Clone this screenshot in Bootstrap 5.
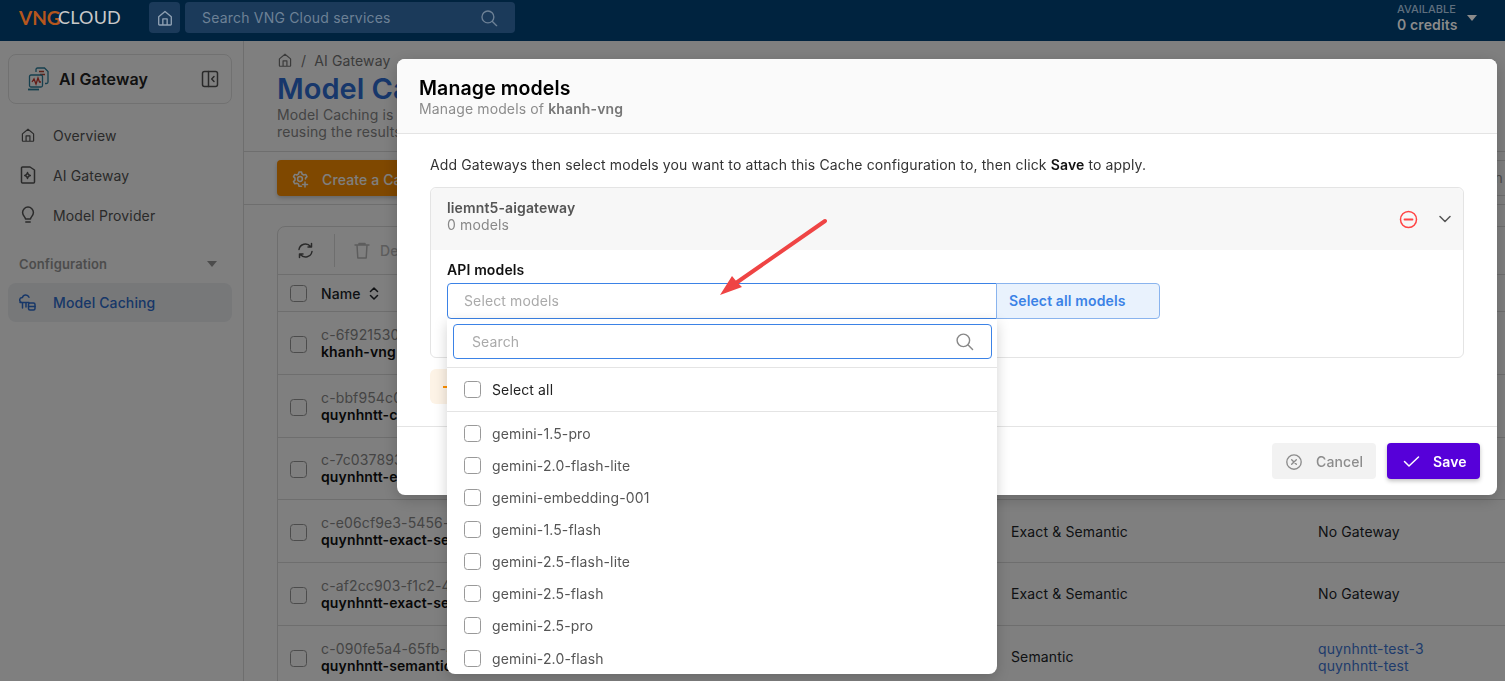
<!DOCTYPE html>
<html>

<head>
  <meta charset="utf-8">
  <title>Model Caching</title>
  <link href="https://cdn.jsdelivr.net/npm/bootstrap@5.3.2/dist/css/bootstrap.min.css" rel="stylesheet" type="text/css" />
  <script src="https://cdn.jsdelivr.net/npm/bootstrap@5.3.2/dist/js/bootstrap.bundle.min.js"></script>
  <style>
    html, body { height: 681px; overflow: hidden; }
    body { font-family: Inter, "Liberation Sans", sans-serif; font-size: 14px; line-height: 17px; letter-spacing: .13px; color: #222; background: #fff; }
    svg { display: block; flex: none; }
    .ic { fill: none; stroke: currentColor; stroke-width: 1.5; stroke-linecap: round; stroke-linejoin: round; }
    button, input { letter-spacing: inherit; }

    /* top bar */
    .topbar { height: 41px; background: #00233f; padding: 2px 0 8px 19px; }
    .logo-vng { font-family: Lato, sans-serif; font-weight: 700; font-size: 19px; color: #b5561d; line-height: 31px; width: 39px; letter-spacing: 0; }
    .logo-cloud { font-family: Lato, sans-serif; font-size: 18px; letter-spacing: .2px; color: #c9c9c9; line-height: 31px; width: 91px; }
    .home-btn { width: 31px; height: 31px; background: #1b3a5a; border-radius: 4px; color: #8fa0b2; }
    .top-search { width: 330px; height: 31px; margin-left: 5px; background: #1b3a5a; border-radius: 4px; padding: 0 17px; color: #6d8196; letter-spacing: .2px; }
    .credits { margin-left: auto; margin-right: 19px; color: #8b8b8b; width: 89px; padding-bottom: 0; }
    .credits-label { font-size: 11px; font-weight: 500; line-height: 13px; color: #5f6f7e; letter-spacing: 0; }
    .credits-num { font-size: 14px; font-weight: 600; line-height: 17px; }
    .caret-down { width: 0; height: 0; border-left: 5px solid transparent; border-right: 5px solid transparent; border-top: 6px solid currentColor; }

    /* side menu */
    .page { height: 640px; }
    .side { width: 244px; flex: none; border-right: 1px solid #ddd; padding: 13px 11px 0 8px; }
    .brand-box { height: 50px; border: 1px solid #e2e2e2; border-radius: 8px; padding: 0 12px 0 18px; }
    .brand-name { font-size: 16px; font-weight: 600; margin-left: 10px; color: #222; }
    .side-nav { margin-top: 11px; }
    .side-nav .nav-link { height: 40px; padding: 0 0 0 12px; gap: 17px; color: #555; font-size: 14px; font-weight: 400; }
    .side-group { margin-top: 19px; height: 20px; padding: 0 15px 0 11px; font-size: 13px; font-weight: 600; color: #999; }
    .side-nav .side-active { margin-top: 9px; height: 39px; background: #eef0f3; border-radius: 8px; color: #2f6fd0; font-weight: 500; padding: 0 0 1px 11px; gap: 17px; }

    /* content */
    .content { min-width: 0; overflow: hidden; }
    .page-head { height: 111px; padding: 10px 33px 0; border-bottom: 1px solid #ddd; }
    .crumbs { height: 18px; margin: 0; font-size: 14px; color: #777; gap: 8px; }
    .page-title { font-size: 29px; line-height: 36px; font-weight: 600; color: #2f6fd6; margin: 2px 0 0; white-space: nowrap; letter-spacing: 0; }
    .page-desc { color: #888; white-space: nowrap; margin: -1px 0 0; }
    .action-row { height: 53px; padding: 8px 0 0 33px; border-bottom: 1px solid #ddd; }
    .btn-create { height: 36px; width: 190px; padding: 2px 14px 0; gap: 13px; background: #ff9000; color: #fff; border: 0; border-radius: 4px; font-size: 14px; font-weight: 500; box-shadow: 0 2px 4px rgba(0,0,0,.2); }
    .filter-box { width: 130px; height: 36px; margin-left: auto; margin-right: -13px; border: 1px solid #ddd; border-radius: 4px; line-height: 34px; padding-right: 14px; text-align: right; color: #999; white-space: nowrap; overflow: hidden; }
    .table-box { margin: 21px -30px 0 33px; border: 1px solid #ddd; border-radius: 8px 8px 0 0; }
    .table-tools { height: 47px; color: #555; }
    .tool-cell { height: 33px; padding: 0 20px 0 19px; }
    .tool-del { border-left: 1px solid #ddd; color: #bbb; gap: 10px; font-weight: 500; padding-right: 200px; }
    .cache-table { table-layout: fixed; width: 1260px; margin: 0; }
    .cache-table th, .cache-table td { padding: 0; vertical-align: middle; border-color: #ddd; font-size: 14px; }
    .cache-table th { height: 37px; border-top: 1px solid #ddd; font-weight: 500; }
    .cache-table td { height: 62.75px; }
    .cache-table th .form-check-input { margin: 0 0 0 12px; }
    .cache-table td .form-check-input { margin: 3px 0 0 12px; }
    .col-check { width: 43px; }
    .col-name { width: 690px; }
    .col-type { width: 307px; }
    .cache-id { color: #8a8a8a; white-space: nowrap; }
    .cache-name { font-weight: 600; color: #111; white-space: nowrap; }
    .gw-link { color: #3f78d8; display: block; text-decoration: none; }

    .form-check-input { width: 17px; height: 17px; border: 1px solid #999; border-radius: 4px; margin: 0; flex: none; }

    /* dialog */
    .shade { position: fixed; left: 0; right: 0; top: 41px; bottom: 0; background: rgba(0,0,0,.5); }
    .dialog { position: fixed; left: 397px; top: 59px; width: 1100px; height: 436px; background: #fff; border-radius: 8px; box-shadow: 0 4px 16px rgba(0,0,0,.2); }
    .dialog-head { height: 75px; background: #fafafa; border-bottom: 1px solid #e4e4e4; border-radius: 8px 8px 0 0; padding: 19px 22px 0; }
    .dialog-title { font-size: 19.5px; line-height: 20px; font-weight: 600; color: #000; margin: 0; }
    .dialog-sub { color: #8c8c8c; margin: 2px 0 0; }
    .dialog-sub b { font-weight: 600; color: #777; }
    .dialog-body { height: 292px; padding: 22px 33px 0; color: #333; }
    .dialog-body > p { margin: 0 0 14px; }
    .dialog-body > p b { font-weight: 600; color: #111; }
    .gw-panel { height: 171px; border: 1px solid #e4e4e4; border-radius: 6px; }
    .gw-head { height: 62px; background: #f7f7f7; border-radius: 6px 6px 0 0; padding: 0 12px 0 16px; }
    .gw-title { padding-bottom: 6px; }
    .gw-name { font-weight: 600; color: #555; }
    .gw-count { color: #888; }
    .gw-minus { color: #f44; margin-right: 21px; }
    .gw-chevron { color: #555; }
    .gw-body { padding: 11px 16px 0; position: relative; }
    .field-label { font-weight: 600; color: #111; margin-bottom: 5px; display: block; }
    .pick-wrap { position: relative; width: 713px; }
    .pick-input { height: 36px; width: 550px; flex: none; border: 1px solid #3b82e6; border-radius: 4px 0 0 4px; padding: 0 16px 2px; font-size: 14px; box-shadow: none; }
    .pick-input::placeholder, .drop-search input::placeholder { color: #aaa; }
    .pick-all { height: 36px; width: 164px; margin-left: -1px; padding: 0 12px 2px; text-align: left; background: #e9f2fd; border: 1px solid #8ab4ee; border-radius: 0 4px 4px 0; color: #3b82e6; font-size: 14px; font-weight: 600; }
    .drop { position: absolute; left: 0; top: 36px; width: 550px; height: 355px; background: #fff; border-radius: 0 0 8px 8px; box-shadow: 0 4px 14px rgba(0,0,0,.18); overflow: hidden; z-index: 2; }
    .drop-search { position: relative; margin: 5px 5px 8px 6px; }
    .drop-search input { height: 35px; border: 1px solid #3b82e6; border-radius: 4px; padding: 0 18px; font-size: 14px; box-shadow: none; }
    .drop-search svg { position: absolute; right: 18px; top: 8px; color: #888; }
    .drop-all { height: 45px; gap: 11px; padding: 0 17px; border-top: 1px solid #e4e4e4; border-bottom: 1px solid #e4e4e4; color: #222; }
    .drop-list { padding-top: 5px; }
    .drop-list .list-group-item { height: 32.15px; border: 0; padding: 0 17px; gap: 11px; color: #555; background: transparent; }
    .warn-box { width: 420px; height: 35px; margin-top: 11px; background: #fdf3e6; border-radius: 6px; padding-left: 13px; color: #ff9000; }
    .warn-dash { width: 5px; height: 2px; background: currentColor; }
    .dialog-foot { height: 69px; border-top: 1px solid #e4e4e4; padding: 16px 17px 0 0; gap: 11px; }
    .btn-cancel { width: 104px; height: 36px; gap: 13px; padding: 1px 13px 0; background: #f2f2f2; border: 0; border-radius: 4px; color: #8c8c8c; font-size: 14px; font-weight: 500; }
    .btn-save { width: 93px; height: 36px; gap: 13px; padding: 1px 16px 0; background: #5600d9; border: 0; border-radius: 4px; color: #fff; font-size: 14px; font-weight: 600; box-shadow: 0 2px 4px rgba(0,0,0,.25); }
    .note-arrow { position: fixed; left: 710px; top: 212px; pointer-events: none; z-index: 3; }
  </style>
</head>

<body>
  <svg width="0" height="0" class="position-absolute">
    <symbol id="i-home" viewBox="0 0 20 20"><path d="M3 8.600 10 2.800l7 5.800V17a.8.8 0 0 1-.8.8H3.800A.8.8 0 0 1 3 17zM7.600 17.800V11h4.800v6.800"/></symbol>
    <symbol id="i-search" viewBox="0 0 20 20"><circle cx="8.800" cy="8.800" r="6.600"/><path d="m13.800 13.800 4.700 4.700"/></symbol>
    <symbol id="i-check-x" viewBox="0 0 20 20"><circle cx="10" cy="10" r="8"/><path d="m7.400 7.400 5.200 5.200m0-5.200-5.200 5.200"/></symbol>
  </svg>

  <header class="topbar d-flex align-items-center">
    <span class="logo-vng">VNG</span>
    <span class="logo-cloud">CLOUD</span>
    <span class="home-btn d-flex align-items-center justify-content-center">
      <svg class="ic" width="18" height="18"><use href="#i-home" /></svg>
    </span>
    <div class="top-search d-flex align-items-center justify-content-between">
      <span>Search VNG Cloud services</span>
      <svg class="ic" width="18" height="18"><use href="#i-search" /></svg>
    </div>
    <div class="credits">
      <div class="credits-label">AVAILABLE</div>
      <div class="credits-num">0 credits</div>
    </div>
    <span class="caret-down position-absolute" style="left:1467px;top:15px;color:#8b8b8b"></span>
  </header>

  <div class="page d-flex">
    <aside class="side">
      <div class="brand-box d-flex align-items-center">
        <svg width="22" height="24" viewBox="0 0 22 24" fill="none" stroke-width="1.300">
          <path d="M9 5V2.500A1.500 1.500 0 0 1 10.500 1h7l3.500 3.500V15a1.500 1.500 0 0 1-1.500 1.500H18" stroke="#2c7f9c"/>
          <path d="M12 4.500h5M13 7.500h5" stroke="#b8402f"/>
          <rect x="2.500" y="8" width="13" height="12" rx="1.500" stroke="#2c7f9c"/>
          <path d="M5 15l2-3 2 5 2-6 1.500 4H14" stroke="#c8372d"/>
          <path d="M1 22.500h11" stroke="#2c7f9c" stroke-width="1.800"/>
        </svg>
        <span class="brand-name">AI Gateway</span>
        <svg class="ic ms-auto" width="18" height="18" viewBox="0 0 18 18" style="color:#555"><rect x="1.500" y="1.500" width="15" height="15" rx="2"/><path d="M7.500 1.500v15M13 6.500 10.700 9l2.300 2.500"/></svg>
      </div>
      <nav class="nav flex-column side-nav">
        <a class="nav-link d-flex align-items-center" href="#"><svg class="ic" width="16" height="16"><use href="#i-home" /></svg>Overview</a>
        <a class="nav-link d-flex align-items-center" href="#">
          <svg class="ic" width="16" height="18" viewBox="0 0 16 18"><path d="M2.500 1h7.500L14.500 4v12a1 1 0 0 1-1 1h-11a1 1 0 0 1-1-1V2a1 1 0 0 1 1-1z"/><path d="M7.500 6.500c.3 2 1 2.600 2.800 3-1.800.4-2.500 1-2.800 3-.3-2-1-2.600-2.800-3 1.800-.4 2.500-1 2.800-3z"/></svg>AI Gateway</a>
        <a class="nav-link d-flex align-items-center" href="#">
          <svg class="ic" width="16" height="18" viewBox="0 0 16 18"><path d="M5.500 13c0-2-2.900-3.200-2.900-6.500a5.400 5.400 0 0 1 10.800 0C13.400 9.800 10.500 11 10.500 13zM5.800 16h4.400"/></svg>Model Provider</a>
        <div class="side-group d-flex align-items-center justify-content-between"><span>Configuration</span><span class="caret-down"></span></div>
        <a class="nav-link side-active d-flex align-items-center" href="#">
          <svg class="ic" width="17" height="17" viewBox="0 0 17 17"><path d="M3 8.500a2.500 2.500 0 0 1 .4-5A3.500 3.500 0 0 1 10 3.200M1 8.500h9M3.500 8.500V14M7 8.500V13"/><rect x="9.500" y="9" width="6.500" height="7" rx="1.500"/><path d="M9.500 12.500H16"/></svg>Model Caching</a>
      </nav>
    </aside>

    <main class="content flex-grow-1">
      <div class="page-head">
        <div class="crumbs d-flex align-items-center">
          <svg class="ic" width="16" height="16"><use href="#i-home" /></svg><span>/</span><span>AI Gateway</span>
        </div>
        <h1 class="page-title">Model Caching</h1>
        <p class="page-desc">Model Caching is<br>reusing the results</p>
      </div>
      <div class="action-row d-flex">
        <button class="btn-create d-flex align-items-center" type="button">
          <svg class="ic" width="18" height="18" viewBox="0 0 18 18"><path d="M10.500 16.200H8l-.5-2-1.700-1-2 .6-1.300-2.200 1.500-1.500V8.100L2.500 6.600l1.300-2.200 2 .6 1.700-1 .5-2h2.500l.5 2 1.700 1 2-.6 1.300 2.200-1.500 1.500v1"/><circle cx="9" cy="9" r="2.400"/><path d="M14 12v5m-2.500-2.500h5"/></svg>
          Create a Cache
        </button>
        <div class="filter-box">Search column</div>
      </div>
      <div class="table-box">
        <div class="table-tools d-flex align-items-center">
          <span class="tool-cell d-flex align-items-center">
            <svg class="ic" width="17" height="17" viewBox="0 0 17 17"><path d="M2 7.500A6.500 6.500 0 0 1 13.500 4.500M15 9.500A6.500 6.500 0 0 1 3.500 12.500M14.500 1.500v3.500H11M2.500 15.500V12H6"/></svg>
          </span>
          <span class="tool-cell tool-del d-flex align-items-center">
            <svg class="ic" width="16" height="17" viewBox="0 0 16 17"><path d="M1 3h14M5 3V1.500h6V3M3 3l.8 13h8.400L13 3"/></svg>Delete
          </span>
        </div>
        <table class="table cache-table">
          <colgroup><col class="col-check"><col class="col-name"><col class="col-type"><col></colgroup>
          <thead>
            <tr>
              <th><input class="form-check-input" type="checkbox" aria-label="Select all rows"></th>
              <th><span class="d-flex align-items-center gap-2">Name
                <svg class="ic" width="10" height="13" viewBox="0 0 10 13"><path d="M1.500 4.500 5 1l3.500 3.500M1.500 8.500 5 12l3.500-3.500"/></svg></span></th>
              <th></th>
              <th></th>
            </tr>
          </thead>
          <tbody>
            <tr>
              <td><input class="form-check-input" type="checkbox" aria-label="Select row"></td>
              <td><div class="cache-id">c-6f921530-</div><div class="cache-name">khanh-vng</div></td>
              <td></td><td></td>
            </tr>
            <tr>
              <td><input class="form-check-input" type="checkbox" aria-label="Select row"></td>
              <td><div class="cache-id">c-bbf954c0-</div><div class="cache-name">quynhntt-cache</div></td>
              <td></td><td></td>
            </tr>
            <tr>
              <td><input class="form-check-input" type="checkbox" aria-label="Select row"></td>
              <td><div class="cache-id">c-7c037893-</div><div class="cache-name">quynhntt-exact</div></td>
              <td></td><td></td>
            </tr>
            <tr>
              <td><input class="form-check-input" type="checkbox" aria-label="Select row"></td>
              <td><div class="cache-id">c-e06cf9e3-5456-4</div><div class="cache-name">quynhntt-exact-semantic</div></td>
              <td>Exact &amp; Semantic</td><td>No Gateway</td>
            </tr>
            <tr>
              <td><input class="form-check-input" type="checkbox" aria-label="Select row"></td>
              <td><div class="cache-id">c-af2cc903-f1c2-41</div><div class="cache-name">quynhntt-exact-semantic</div></td>
              <td>Exact &amp; Semantic</td><td>No Gateway</td>
            </tr>
            <tr>
              <td><input class="form-check-input" type="checkbox" aria-label="Select row"></td>
              <td><div class="cache-id">c-090fe5a4-65fb-43</div><div class="cache-name">quynhntt-semantic</div></td>
              <td>Semantic</td><td><a class="gw-link" href="#">quynhntt-test-3</a><a class="gw-link" href="#">quynhntt-test</a></td>
            </tr>
          </tbody>
        </table>
      </div>
    </main>
  </div>

  <div class="shade"></div>

  <div class="dialog" role="dialog">
    <div class="dialog-head">
      <h5 class="dialog-title">Manage models</h5>
      <p class="dialog-sub">Manage models of <b>khanh-vng</b></p>
    </div>
    <div class="dialog-body">
      <p>Add Gateways then select models you want to attach this Cache configuration to, then click <b>Save</b> to apply.</p>
      <div class="gw-panel">
        <div class="gw-head d-flex align-items-center">
          <div class="flex-grow-1 gw-title">
            <div class="gw-name">liemnt5-aigateway</div>
            <div class="gw-count">0 models</div>
          </div>
          <svg class="ic gw-minus" width="19" height="19" viewBox="0 0 19 19"><circle cx="9.500" cy="9.500" r="8"/><path d="M5.500 9.500h8" stroke-width="1.800"/></svg>
          <svg class="ic gw-chevron" width="12" height="8" viewBox="0 0 12 8"><path d="M1 1.500 6 6.500l5-5"/></svg>
        </div>
        <div class="gw-body">
          <label class="field-label">API models</label>
          <div class="pick-wrap">
            <div class="d-flex">
              <input class="form-control pick-input" type="text" placeholder="Select models">
              <button class="pick-all" type="button">Select all models</button>
            </div>
            <div class="drop">
              <div class="drop-search">
                <input class="form-control" type="text" placeholder="Search">
                <svg class="ic" width="19" height="19"><use href="#i-search" /></svg>
              </div>
              <div class="drop-all d-flex align-items-center"><input class="form-check-input" type="checkbox" aria-label="Select all"><span>Select all</span></div>
              <ul class="list-group list-group-flush drop-list">
                <li class="list-group-item d-flex align-items-center"><input class="form-check-input" type="checkbox" aria-label="gemini-1.5-pro"><span>gemini-1.5-pro</span></li>
                <li class="list-group-item d-flex align-items-center"><input class="form-check-input" type="checkbox" aria-label="gemini-2.0-flash-lite"><span>gemini-2.0-flash-lite</span></li>
                <li class="list-group-item d-flex align-items-center"><input class="form-check-input" type="checkbox" aria-label="gemini-embedding-001"><span>gemini-embedding-001</span></li>
                <li class="list-group-item d-flex align-items-center"><input class="form-check-input" type="checkbox" aria-label="gemini-1.5-flash"><span>gemini-1.5-flash</span></li>
                <li class="list-group-item d-flex align-items-center"><input class="form-check-input" type="checkbox" aria-label="gemini-2.5-flash-lite"><span>gemini-2.5-flash-lite</span></li>
                <li class="list-group-item d-flex align-items-center"><input class="form-check-input" type="checkbox" aria-label="gemini-2.5-flash"><span>gemini-2.5-flash</span></li>
                <li class="list-group-item d-flex align-items-center"><input class="form-check-input" type="checkbox" aria-label="gemini-2.5-pro"><span>gemini-2.5-pro</span></li>
                <li class="list-group-item d-flex align-items-center"><input class="form-check-input" type="checkbox" aria-label="gemini-2.0-flash"><span>gemini-2.0-flash</span></li>
              </ul>
            </div>
          </div>
        </div>
      </div>
      <div class="warn-box d-flex align-items-center"><span class="warn-dash"></span></div>
    </div>
    <div class="dialog-foot d-flex justify-content-end">
      <button class="btn-cancel d-flex align-items-center" type="button"><svg class="ic" width="18" height="18"><use href="#i-check-x" /></svg>Cancel</button>
      <button class="btn-save d-flex align-items-center" type="button"><svg class="ic" width="17" height="13" viewBox="0 0 17 13"><path d="M1.500 6.500 6 11 15.500 2"/></svg>Save</button>
    </div>
  </div>

  <svg class="note-arrow" width="124" height="90" viewBox="0 0 124 90">
    <path d="M115 9 26 71" stroke="#ef4444" stroke-width="4" stroke-linecap="round" />
    <path d="M10 83 22 64l5 6 5 5z" fill="#ef4444" />
  </svg>
</body>

</html>
